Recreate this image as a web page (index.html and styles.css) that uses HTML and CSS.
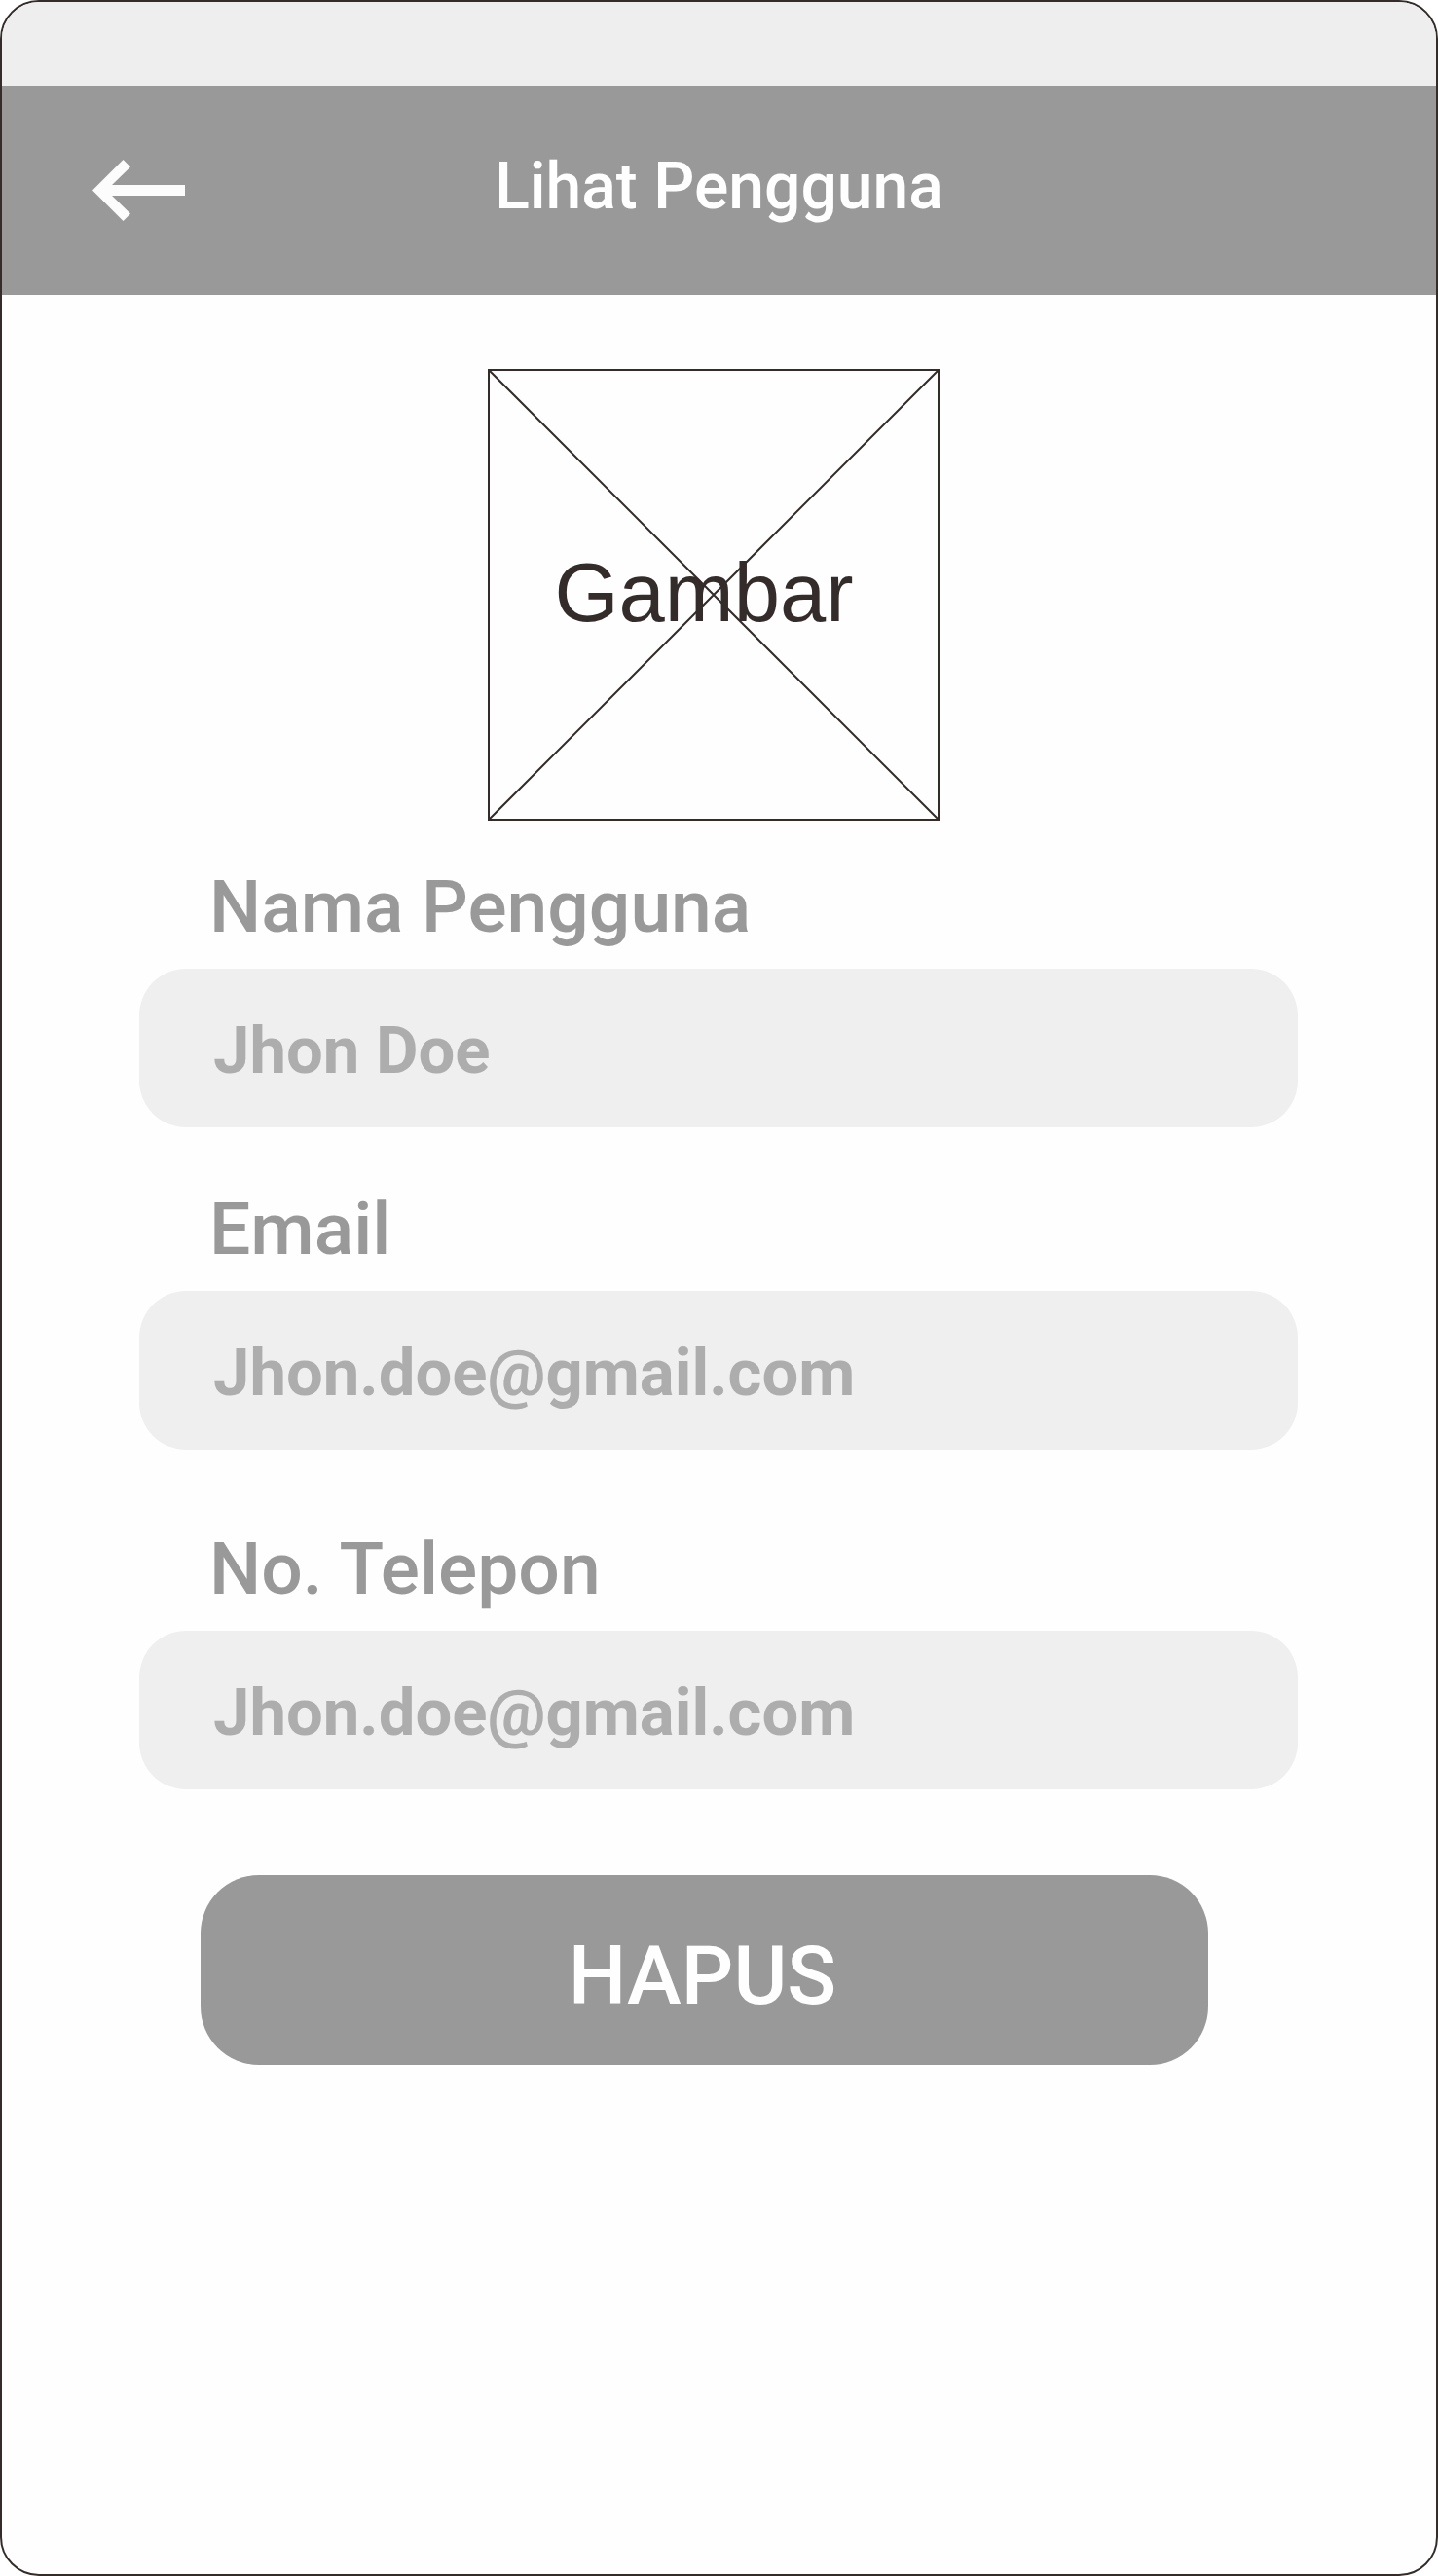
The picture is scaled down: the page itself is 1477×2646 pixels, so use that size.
FILE: index.html
```html
<!DOCTYPE html>
<html lang="id">
<head>
<meta charset="utf-8">
<meta name="viewport" content="width=device-width, initial-scale=1">
<title>Lihat Pengguna</title>
<link rel="stylesheet" href="styles.css">
</head>
<body>
<div class="screen">
  <div class="status-bar"></div>
  <header class="app-bar">
    <a class="back" href="#" aria-label="Kembali">
      <svg viewBox="0 0 96 64" width="96" height="64" fill="#fcfcfc"><path d="M1 31.500 32.500 0 40 7.500 21 26H96V37H21L40 55.500 32.500 63Z"/></svg>
    </a>
    <h1 class="title">Lihat Pengguna</h1>
  </header>
  <main class="content">
    <div class="picture-row">
      <div class="picture">
        <svg class="cross" viewBox="0 0 460 460" preserveAspectRatio="none" fill="none" stroke="#332c2b" stroke-width="2"><path d="M0 0 460 460M460 0 0 460"/></svg>
        <span class="picture-text">Gambar</span>
      </div>
    </div>
    <form class="form">
      <div class="field">
        <label class="label" for="name">Nama Pengguna</label>
        <input class="input" id="name" type="text" value="Jhon Doe">
      </div>
      <div class="field field-email">
        <label class="label" for="email">Email</label>
        <input class="input" id="email" type="email" value="Jhon.doe@gmail.com">
      </div>
      <div class="field field-phone">
        <label class="label" for="phone">No. Telepon</label>
        <input class="input" id="phone" type="text" value="Jhon.doe@gmail.com">
      </div>
      <button class="delete" type="button">HAPUS</button>
    </form>
  </main>
</div>
</body>
</html>
```

FILE: styles.css
```css
* {
  box-sizing: border-box;
}

body {
  margin: 0;
  background: #fff;
  font-family: Roboto, "Liberation Sans", sans-serif;
}

.screen {
  min-height: 100vh;
  border: 2px solid #332c2b;
  border-radius: 40px;
  background: #fefefe;
  overflow: hidden;
}

.status-bar {
  height: 86px;
  background: #eee;
}

.app-bar {
  display: grid;
  grid-template-columns: 1fr auto 1fr;
  align-items: center;
  height: 215px;
  padding: 0 92px;
  background: #999;
}

.back {
  display: flex;
}

.title {
  margin: 0;
  padding-bottom: 8px;
  color: #fefefe;
  font-size: 66px;
  font-weight: 500;
  line-height: 80px;
}

.content {
  padding: 76px 142px 0 141px;
}

.picture-row {
  display: flex;
  justify-content: center;
  padding-right: 10px;
}

.picture {
  position: relative;
  display: flex;
  align-items: center;
  justify-content: center;
  width: 464px;
  height: 464px;
  padding: 0 20px 4px 0;
  border: 2px solid #332c2b;
}

.cross {
  position: absolute;
  inset: 0;
  width: 100%;
  height: 100%;
}

.picture-text {
  color: #332c2b;
  font-family: "Liberation Sans", Arial, sans-serif;
  font-size: 85px;
  line-height: 96px;
}

.form {
  display: flex;
  flex-direction: column;
}

.field {
  display: flex;
  flex-direction: column;
  gap: 22px;
  margin-top: 46px;
}

.field-email {
  margin-top: 62px;
}

.field-phone {
  margin-top: 80px;
}

.label {
  padding-left: 72px;
  color: #999;
  font-size: 75px;
  font-weight: 500;
  line-height: 84px;
}

.input {
  width: 100%;
  height: 163px;
  padding: 5px 76px 0;
  border: 0;
  border-radius: 48px;
  background: #efefef;
  color: #adadad;
  font-family: inherit;
  font-size: 67px;
  font-weight: 700;
}

.delete {
  height: 195px;
  margin: 88px 92px 0 63px;
  padding: 12px 4px 0 0;
  border: 0;
  border-radius: 60px;
  background: #999;
  color: #fefefe;
  font-family: inherit;
  font-size: 84px;
  font-weight: 500;
}
```
